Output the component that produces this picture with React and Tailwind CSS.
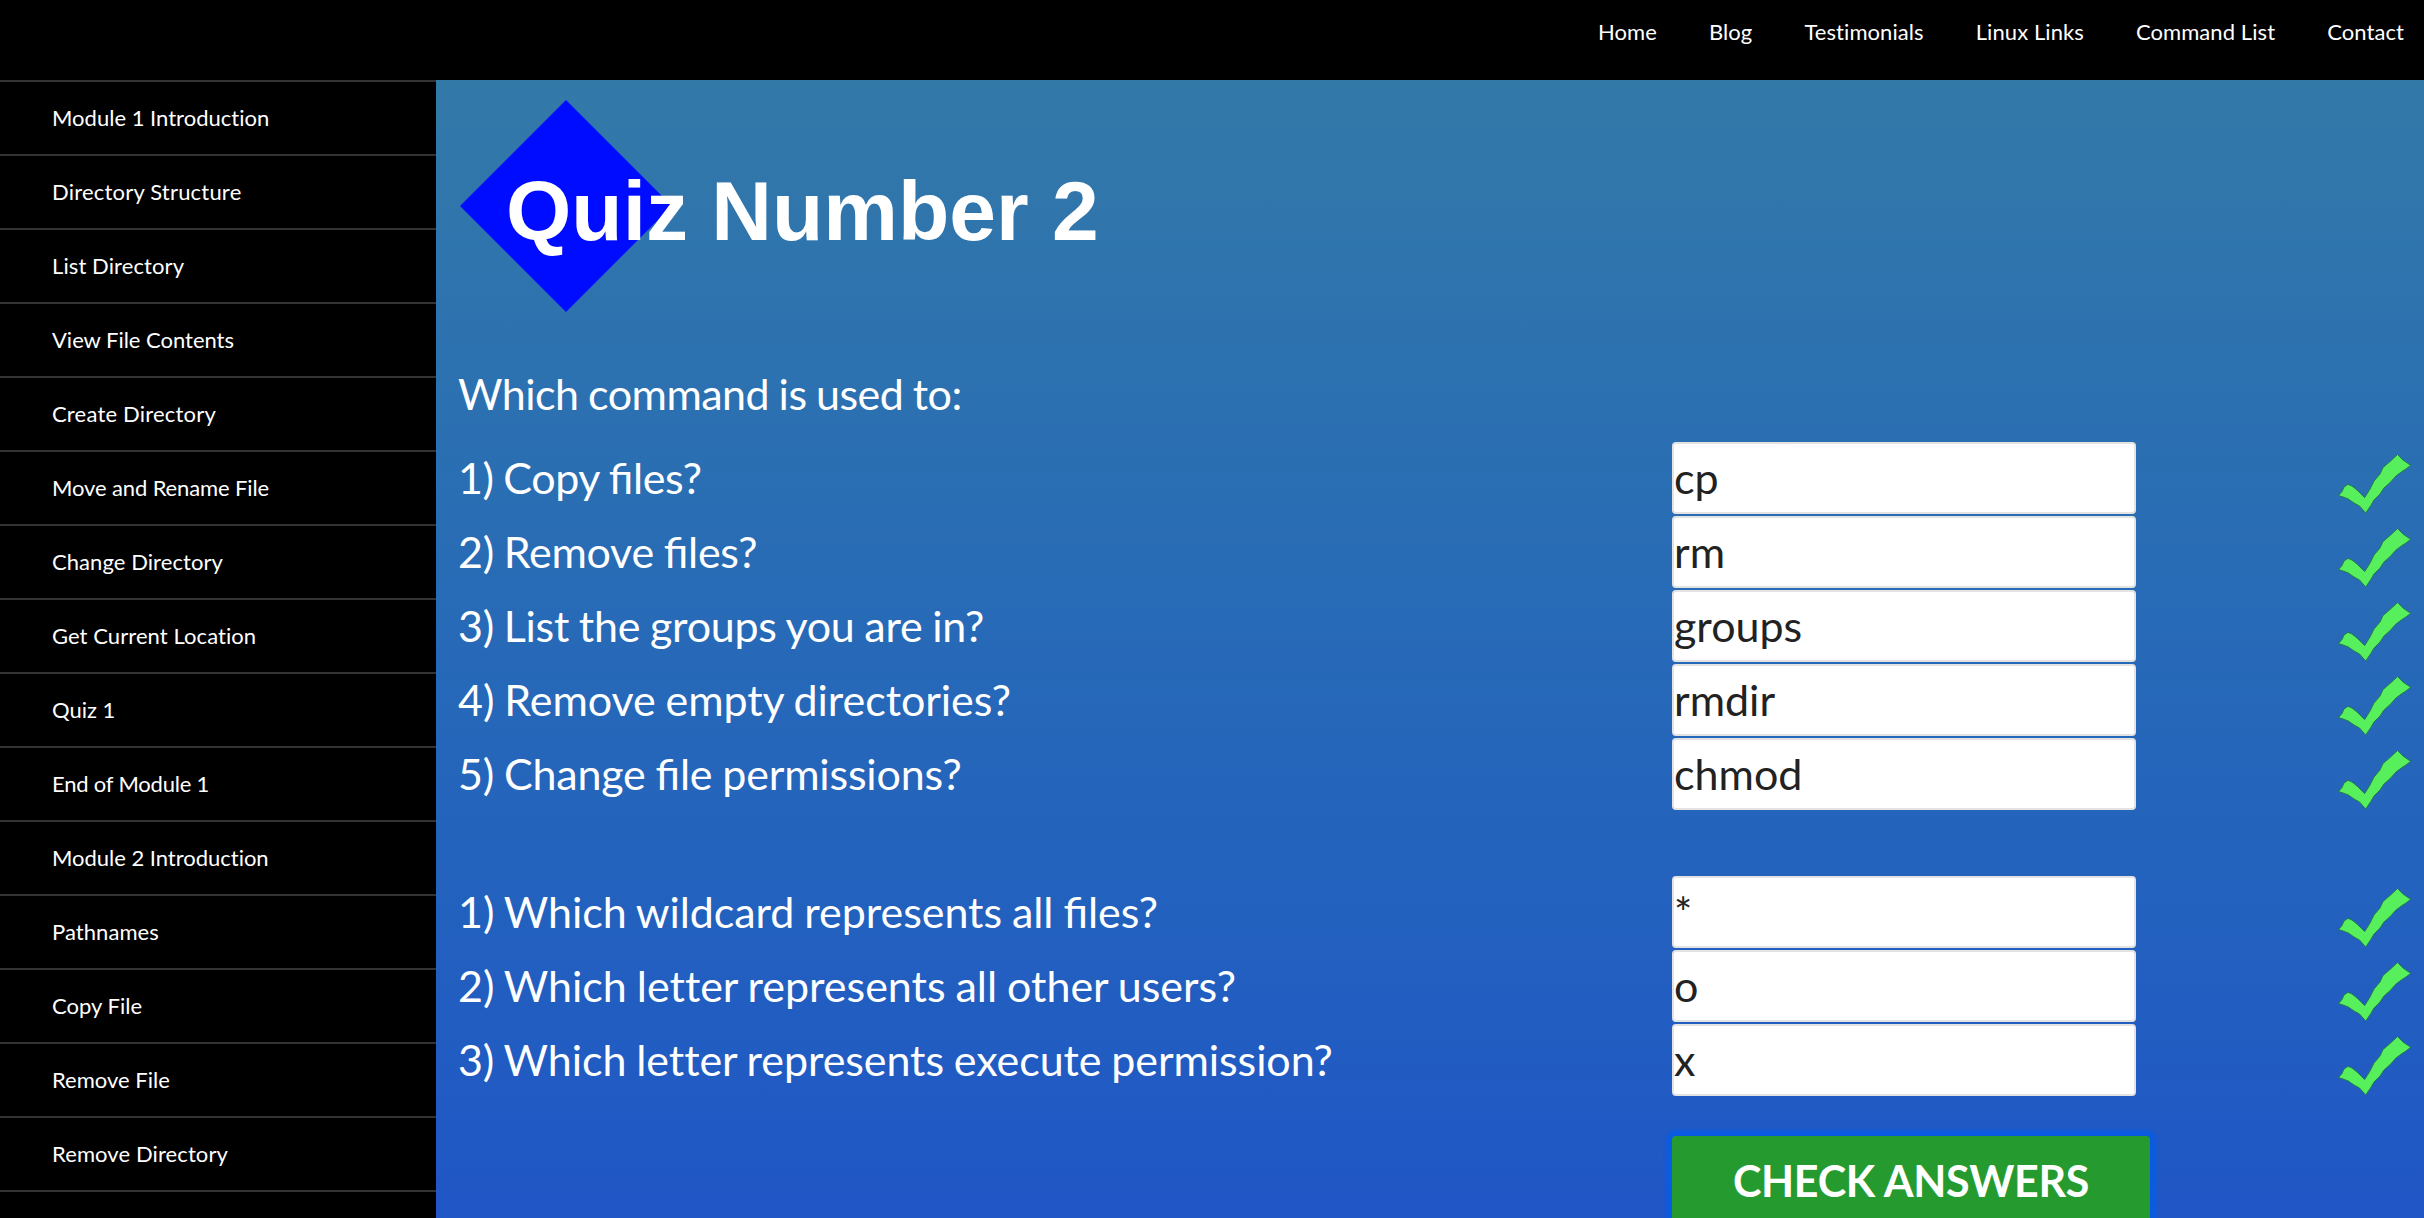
const nav = ["Home", "Blog", "Testimonials", "Linux Links", "Command List", "Contact"];

const modules = [
  { name: "Module 1 Introduction", tracking: "tracking-[0.01px]" },
  { name: "Directory Structure", tracking: "tracking-[0.2px]" },
  { name: "List Directory", tracking: "tracking-[0.1px]" },
  { name: "View File Contents", tracking: "tracking-[-0.02px]" },
  { name: "Create Directory", tracking: "tracking-[0.2px]" },
  { name: "Move and Rename File", tracking: "tracking-[-0.12px]" },
  { name: "Change Directory", tracking: "tracking-[0.07px]" },
  { name: "Get Current Location", tracking: "tracking-[0.07px]" },
  { name: "Quiz 1", tracking: "tracking-[0.01px]" },
  { name: "End of Module 1", tracking: "tracking-[-0.2px]" },
  { name: "Module 2 Introduction", tracking: "tracking-[-0.02px]" },
  { name: "Pathnames", tracking: "tracking-[0.07px]" },
  { name: "Copy File", tracking: "tracking-[0.01px]" },
  { name: "Remove File", tracking: "tracking-[0.01px]" },
  { name: "Remove Directory", tracking: "tracking-[0.1px]" },
];

const commands = [
  { text: "1) Copy files?", answer: "cp", tracking: "tracking-[-0.38px]" },
  { text: "2) Remove files?", answer: "rm", tracking: "tracking-[-0.25px]" },
  { text: "3) List the groups you are in?", answer: "groups", tracking: "tracking-[-0.25px]" },
  { text: "4) Remove empty directories?", answer: "rmdir", tracking: "tracking-[-0.06px]" },
  { text: "5) Change file permissions?", answer: "chmod", tracking: "tracking-[-0.18px]" },
];

const symbols = [
  { text: "1) Which wildcard represents all files?", answer: "*", tracking: "tracking-[-0.05px]" },
  { text: "2) Which letter represents all other users?", answer: "o", tracking: "tracking-[-0.02px]" },
  { text: "3) Which letter represents execute permission?", answer: "x", tracking: "tracking-[-0.08px]" },
];

function Tick() {
  return (
    <svg className="mt-[10px] ml-[201px] h-[62px] w-[76px] shrink-0" viewBox="0 0 76 62">
      <path
        d="M1.5 43.5L5 39.5L7 35L11 32.3L15 34L20 38L27.7 45.5L33 37L37 29L43 22L46 15.5L53 9.5L60.5 2.5L66 8L73.7 13.3L69 17L64.7 19.7L59 24L53 30.7L47 36L43 42L37 48L33.7 53.7L28.7 61L22.5 54L17 51L11.3 47L6 45Z"
        fill="#57f05c"
        stroke="#25784f"
        strokeWidth="1"
        strokeLinejoin="round"
      />
    </svg>
  );
}

/* Words with "fi" keep their ligature even though the line is tracked. */
function Words({ text }) {
  return text.split(/(\S*fi\S*)/).map((part, i) =>
    i % 2 ? (
      <span key={i} className="[font-feature-settings:'liga'_1]">
        {part}
      </span>
    ) : (
      part
    ),
  );
}

function Question({ text, answer, tracking }) {
  return (
    <div className="flex h-[74px]">
      <label className={`w-[1214px] shrink-0 leading-[71px] [word-spacing:-1px] ${tracking}`}>
        <Words text={text} />
      </label>
      <input
        className="h-[72px] w-[464px] shrink-0 rounded-[4px] border-2 border-[#e3e3e3] bg-white pb-[1px] text-[43px] text-[#222]"
        defaultValue={answer}
      />
      <Tick />
    </div>
  );
}

export default function App() {
  return (
    <div className="flex h-[1218px] w-[2424px] flex-col overflow-hidden bg-black font-[Lato,sans-serif] text-white">
      <header className="flex h-[80px] shrink-0 justify-end gap-[52px] pr-[20px] text-[22px] leading-[64px] tracking-[0.08px]">
        {nav.map((item) => (
          <a key={item}>{item}</a>
        ))}
      </header>
      <div className="flex min-h-0 flex-1">
        <aside className="w-[436px] shrink-0 text-[22px]">
          {modules.map(({ name, tracking }) => (
            <a
              key={name}
              className={`block h-[74px] border-t-2 border-[#333] pl-[52px] leading-[71px] ${tracking}`}
            >
              {name}
            </a>
          ))}
          <div className="border-t-2 border-[#333]" />
        </aside>
        <main className="flex-1 overflow-hidden bg-linear-to-b from-[#3379a8] to-[#2056c6] pl-[22px] text-[43px]">
          <div className="mt-[20px] grid h-[212px] items-center">
            <svg className="col-start-1 row-start-1 ml-[2px] h-[212px] w-[212px]" viewBox="0 0 212 212">
              <path d="M106 0L212 106L106 212L0 106Z" fill="#000cff" />
            </svg>
            <h1 className="col-start-1 row-start-1 mt-[10px] ml-[48px] font-[Liberation_Sans,sans-serif] text-[84px] leading-[96px] font-bold">
              Quiz Number 2
            </h1>
          </div>
          <p className="mt-[46px] h-[84px] leading-[71px] tracking-[-0.52px] [word-spacing:-1px]">
            Which command is used to:
          </p>
          {commands.map((q) => (
            <Question key={q.text} {...q} />
          ))}
          <div className="h-[64px]" />
          {symbols.map((q) => (
            <Question key={q.text} {...q} />
          ))}
          <button className="mt-[38px] ml-[1214px] block h-[96px] w-[478px] rounded-[4px] bg-[#259b2f] pb-[5px] font-bold tracking-[-0.3px] shadow-[0_0_3px_6px_#0b5be0]">
            CHECK ANSWERS
          </button>
        </main>
      </div>
    </div>
  );
}
